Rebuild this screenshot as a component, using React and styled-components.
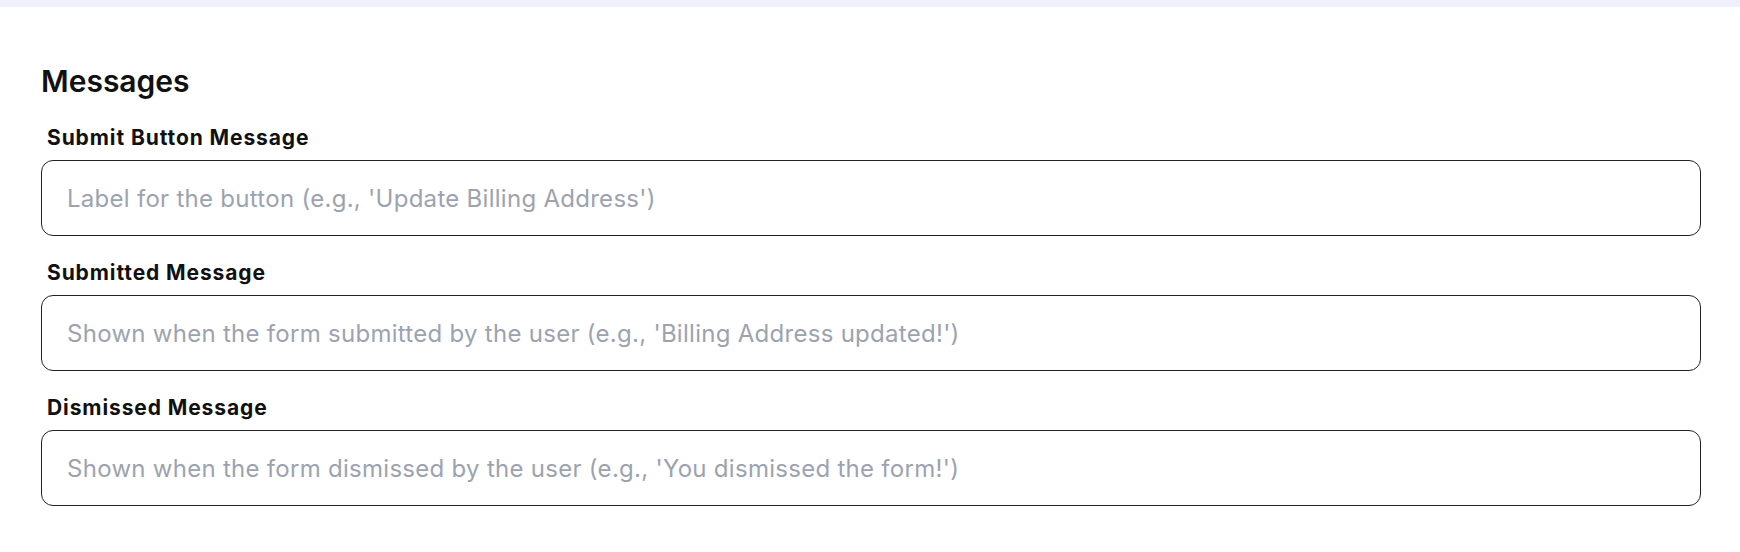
import React from 'react';
import styled, { createGlobalStyle } from 'styled-components';

const GlobalStyle = createGlobalStyle`
    html, body {
        margin: 0;
        padding: 0;
        background: #ffffff;
    }

    body {
        font-family: Inter, "Noto Sans", "Liberation Sans", sans-serif;
        color: #111111;
    }
`;

const fields = [
    {
        id: 'submit-button-message',
        label: 'Submit Button Message',
        placeholder: "Label for the button (e.g., 'Update Billing Address')"
    },
    {
        id: 'submitted-message',
        label: 'Submitted Message',
        placeholder: "Shown when the form submitted by the user (e.g., 'Billing Address updated!')"
    },
    {
        id: 'dismissed-message',
        label: 'Dismissed Message',
        placeholder: "Shown when the form dismissed by the user (e.g., 'You dismissed the form!')"
    }
];

const App = () => {
    return (
        <Root>
            <GlobalStyle />
            <TopBar />

            <Section>
                <Heading>Messages</Heading>

                <FieldList>
                    { fields.map(field => (
                        <Field key={ field.id }>
                            <Label htmlFor={ field.id }>{ field.label }</Label>
                            <Input id={ field.id } type="text" placeholder={ field.placeholder } />
                        </Field>
                    )) }
                </FieldList>
            </Section>
        </Root>
    );
}

export default App;

const Root = styled.div`
    width: 100%;
    min-height: 552px;
    display: flex;
    flex-direction: column;
    background: #ffffff;
`;

const TopBar = styled.div`
    height: 7px;
    width: 100%;
    background-color: #eef1fc;
`;

const Section = styled.section`
    display: flex;
    flex-direction: column;
    padding: 56px 39px 0 41px;
`;

const Heading = styled.h2`
    margin: 0 0 27px;
    font-size: 30px;
    line-height: 36px;
    font-weight: 600;
    color: #111111;
`;

const FieldList = styled.div`
    display: flex;
    flex-direction: column;
    gap: 25px;
`;

const Field = styled.div`
    display: flex;
    flex-direction: column;
    gap: 10px;
`;

const Label = styled.label`
    padding-left: 6px;
    font-size: 21px;
    line-height: 24px;
    font-weight: 700;
    letter-spacing: 0.9px;
    color: #111111;
`;

const Input = styled.input`
    box-sizing: border-box;
    width: 100%;
    height: 76px;
    padding: 0 25px;
    border: 1px solid #1f2328;
    border-radius: 12px;
    background: #ffffff;
    font-family: Inter, "Noto Sans", "Liberation Sans", sans-serif;
    font-size: 24px;
    letter-spacing: 0.28px;
    color: #111111;
    outline: none;

    &::placeholder {
        color: #9ca3af;
        opacity: 1;
    }
`;
